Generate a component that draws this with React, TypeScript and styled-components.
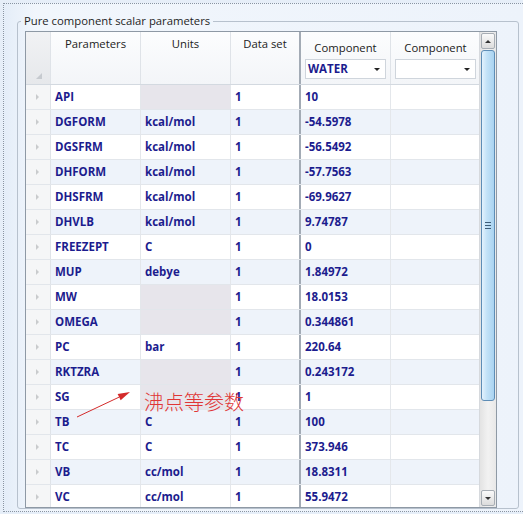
import React from "react";
import styled, { createGlobalStyle } from "styled-components";

const Global = createGlobalStyle`
  html, body { margin: 0; padding: 0; background: #e9f0f8; }
  body { font-family: "Open Sans", "Noto Sans", sans-serif; }
`;

const FONT = `"Open Sans", "Noto Sans", sans-serif`;
const BLUE = "#1c1c8e";

const Page = styled.div`
  width: 523px;
  height: 514px;
  box-sizing: border-box;
  padding: 3px 0 0 3px;
  overflow: hidden;
  background: #e6eef8;
`;

const Frame = styled.div`
  height: 509px;
  box-sizing: border-box;
  border-top: 1px dotted #8994a2;
  border-left: 1px dotted #8994a2;
  border-bottom: 1px dotted #8994a2;
  background: linear-gradient(to right, #e4edf8 0%, #f1f6fc 6%, #edf3fb 100%);
  padding-top: 9px;
`;

const Group = styled.fieldset`
  margin: 0 0 0 13px;
  width: 502px;
  box-sizing: border-box;
  padding: 2px 0 0 7px;
  border: 1px solid #b7c1cd;
  border-radius: 3px;
  min-width: 0;
`;

const Legend = styled.legend`
  font-family: ${FONT};
  font-size: 11.3px;
  line-height: 16px;
  color: #1e1e1e;
  padding: 0 3px;
  margin-left: -4px;
`;

const GridBox = styled.div`
  position: relative;
  width: 472px;
  height: 477px;
  box-sizing: border-box;
  border: 1px solid #8e99a5;
  display: flex;
  background: #fff;
  font-family: ${FONT};
  font-size: 11.5px;
`;

const Main = styled.div`
  width: 455px;
  display: flex;
  flex-direction: column;
  overflow: hidden;
`;

const COLS = "25px 90px 90px 70px 90px 90px";

const HeaderRow = styled.div`
  display: grid;
  grid-template-columns: ${COLS};
  height: 52px;
  border-bottom: 1px solid #d3d9e0;
  background: linear-gradient(to bottom, #fcfdfe, #f3f5f8);
  flex: none;
`;

const HeadCell = styled.div<{ $frozen?: boolean }>`
  border-right: ${(p) => (p.$frozen ? "2px solid #a3abb5" : "1px solid #dfe3e8")};
  color: #222;
  font-size: 11.3px;
  text-align: center;
  padding-top: 4px;
  line-height: 16px;
  display: flex;
  flex-direction: column;
  align-items: center;
`;

const Corner = styled.div`
  border-right: 1px solid #dfe3e8;
  background: linear-gradient(to bottom, #f1f2f4, #e6e8eb);
  position: relative;
`;

const CornerGlyph = styled.div`
  position: absolute;
  right: 8px;
  bottom: 5px;
  width: 0;
  height: 0;
  border-left: 6px solid transparent;
  border-bottom: 6px solid #c6cacf;
`;

const CompTitle = styled.div`
  margin-top: 4px;
`;

const Drop = styled.div`
  margin-top: 3px;
  width: 81px;
  height: 20px;
  box-sizing: border-box;
  border: 1px solid #cfd5dc;
  background: #fff;
  display: flex;
  align-items: center;
  justify-content: space-between;
  padding: 0 5px 0 2px;
  color: ${BLUE};
  font-weight: 700;
  font-size: 11.5px;
`;

const DropArrow = styled.span`
  width: 0;
  height: 0;
  border-left: 3px solid transparent;
  border-right: 3px solid transparent;
  border-top: 3px solid #222;
`;

const Body = styled.div`
  flex: 1;
  overflow: hidden;
`;

const Row = styled.div<{ $alt: boolean }>`
  display: grid;
  grid-template-columns: ${COLS};
  height: 25px;
  box-sizing: border-box;
  border-bottom: 1px solid #e2e6eb;
  background: ${(p) => (p.$alt ? "#eef3fa" : "#ffffff")};
`;

const RowHead = styled.div`
  border-right: 1px solid #dfe3e8;
  background: #f5f6f7;
  display: flex;
  align-items: center;
  padding-left: 10px;
`;

const RowArrow = styled.span`
  width: 0;
  height: 0;
  border-top: 3px solid transparent;
  border-bottom: 3px solid transparent;
  border-left: 3px solid #c9cbcd;
`;

const Cell = styled.div<{ $empty?: boolean; $frozen?: boolean }>`
  border-right: ${(p) => (p.$frozen ? "2px solid #a3abb5" : "1px solid #e4e7eb")};
  background: ${(p) => (p.$empty ? "#e7e5eb" : "transparent")};
  color: ${BLUE};
  font-weight: 700;
  line-height: 24px;
  padding-left: 4px;
  white-space: nowrap;
  overflow: hidden;
`;

const Scroll = styled.div`
  width: 16px;
  flex: none;
  display: flex;
  flex-direction: column;
  background: linear-gradient(to right, #e3e3e3, #f2f2f2 50%, #e8e8e8);
  border-left: 1px solid #d6d9dd;
`;

const ScrollBtn = styled.div<{ $last?: boolean }>`
  height: 16px;
  margin: 1px 1px ${(p) => (p.$last ? "1px" : "0")} 1px;
  box-sizing: border-box;
  border: 1px solid #a7adb4;
  border-radius: 2px;
  background: linear-gradient(to bottom, #fafafa, #dcdcdc);
  display: flex;
  align-items: center;
  justify-content: center;
`;

const BtnGlyph = styled.span<{ $up?: boolean }>`
  width: 0;
  height: 0;
  border-left: 3px solid transparent;
  border-right: 3px solid transparent;
  ${(p) => (p.$up ? "border-bottom: 3px solid #333;" : "border-top: 3px solid #333;")}
`;

const Track = styled.div`
  flex: 1;
  padding: 1px 0;
`;

const Thumb = styled.div`
  height: 351px;
  margin: 0 1px;
  box-sizing: border-box;
  border: 1px solid #5e8db6;
  border-radius: 3px;
  background: linear-gradient(to right, #e3f2fd, #c3e2f7 40%, #a9d3f1 100%);
  display: flex;
  align-items: center;
  justify-content: center;
`;

const Grip = styled.div`
  width: 6px;
  height: 7px;
  background: repeating-linear-gradient(to bottom, #3e5d78 0 1px, transparent 1px 3px);
`;

const Note = styled.div`
  position: absolute;
  left: 118px;
  top: 359px;
  font-family: "Noto Sans CJK SC", sans-serif;
  font-size: 20px;
  line-height: 22px;
  font-weight: 300;
  color: #e03535;
  pointer-events: none;
`;

const ArrowSvg = styled.svg`
  position: absolute;
  left: 48px;
  top: 352px;
  pointer-events: none;
`;

const rows: [string, string, string, string][] = [
  ["API", "", "1", "10"],
  ["DGFORM", "kcal/mol", "1", "-54.5978"],
  ["DGSFRM", "kcal/mol", "1", "-56.5492"],
  ["DHFORM", "kcal/mol", "1", "-57.7563"],
  ["DHSFRM", "kcal/mol", "1", "-69.9627"],
  ["DHVLB", "kcal/mol", "1", "9.74787"],
  ["FREEZEPT", "C", "1", "0"],
  ["MUP", "debye", "1", "1.84972"],
  ["MW", "", "1", "18.0153"],
  ["OMEGA", "", "1", "0.344861"],
  ["PC", "bar", "1", "220.64"],
  ["RKTZRA", "", "1", "0.243172"],
  ["SG", "", "1", "1"],
  ["TB", "C", "1", "100"],
  ["TC", "C", "1", "373.946"],
  ["VB", "cc/mol", "1", "18.8311"],
  ["VC", "cc/mol", "1", "55.9472"],
];

export default function App() {
  const sx = 3, sy = 33, tx = 56, ty = 8;
  const dx = tx - sx, dy = ty - sy;
  const len = Math.hypot(dx, dy);
  const ux = dx / len, uy = dy / len;
  const bx = tx - ux * 12, by = ty - uy * 12;
  const px = -uy * 3.5, py = ux * 3.5;
  return (
    <Page>
      <Global />
      <Frame>
        <Group>
          <Legend>Pure component scalar parameters</Legend>
          <GridBox>
            <Main>
              <HeaderRow>
                <Corner>
                  <CornerGlyph />
                </Corner>
                <HeadCell>Parameters</HeadCell>
                <HeadCell>Units</HeadCell>
                <HeadCell $frozen>Data set</HeadCell>
                <HeadCell>
                  <CompTitle>Component</CompTitle>
                  <Drop>
                    <span>WATER</span>
                    <DropArrow />
                  </Drop>
                </HeadCell>
                <HeadCell>
                  <CompTitle>Component</CompTitle>
                  <Drop>
                    <span />
                    <DropArrow />
                  </Drop>
                </HeadCell>
              </HeaderRow>
              <Body>
                {rows.map((r, i) => (
                  <Row key={r[0]} $alt={i % 2 === 1}>
                    <RowHead>
                      <RowArrow />
                    </RowHead>
                    <Cell>{r[0]}</Cell>
                    <Cell $empty={r[1] === ""}>{r[1]}</Cell>
                    <Cell $frozen>{r[2]}</Cell>
                    <Cell>{r[3]}</Cell>
                    <Cell />
                  </Row>
                ))}
              </Body>
            </Main>
            <Scroll>
              <ScrollBtn>
                <BtnGlyph $up />
              </ScrollBtn>
              <Track>
                <Thumb>
                  <Grip />
                </Thumb>
              </Track>
              <ScrollBtn $last>
                <BtnGlyph />
              </ScrollBtn>
            </Scroll>
            <ArrowSvg width="62" height="40" viewBox="0 0 62 40">
              <line x1={sx} y1={sy} x2={bx} y2={by} stroke="#d42a2a" strokeWidth="1" />
              <polygon
                points={`${tx},${ty} ${bx + px},${by + py} ${bx - px},${by - py}`}
                fill="#d42a2a"
              />
            </ArrowSvg>
            <Note>沸点等参数</Note>
          </GridBox>
        </Group>
      </Frame>
    </Page>
  );
}
